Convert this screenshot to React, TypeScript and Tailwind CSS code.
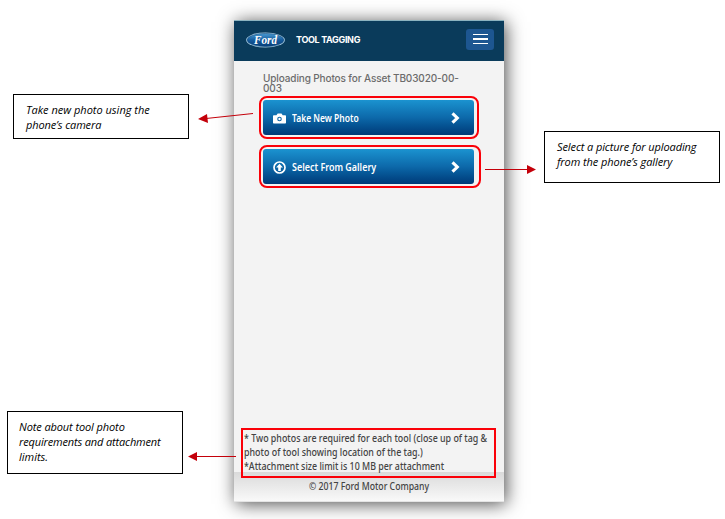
import React from "react";

function Callout({ lines, className }: { lines: { text: string; style: string }[]; className: string }) {
  return (
    <div className={`w-[176px] border border-black bg-white pl-[12px] font-['Open_Sans','Noto_Sans',sans-serif] text-[11px] leading-[15px] italic text-black ${className}`}>
      {lines.map((l) => (
        <div key={l.text} className={`whitespace-nowrap ${l.style}`}>{l.text}</div>
      ))}
    </div>
  );
}

function Chevron() {
  return (
    <svg className="mr-[14px] h-[12px] w-[9px]" viewBox="0 0 9 12" fill="none">
      <path d="M1.5 1.300 6.300 6 1.500 10.700" stroke="white" strokeWidth="3.100" />
    </svg>
  );
}

function Camera() {
  return (
    <svg className="h-[11px] w-[13px]" viewBox="0 0 13 11">
      <path fill="white" fillRule="evenodd" d="M1 2.2h2.4L4.7.4h3.8l1.2 1.8H12c.6 0 1 .4 1 1v6.3c0 .6-.4 1-1 1H1c-.6 0-1-.4-1-1V3.2c0-.6.4-1 1-1ZM6.5 3.7a2.300 2.300 0 1 0 0 4.600 2.300 2.300 0 0 0 0-4.600Z" />
      <circle cx="6.500" cy="6" r="1.200" fill="white" />
    </svg>
  );
}

function Upload() {
  return (
    <svg className="h-[13px] w-[13px]" viewBox="0 0 13 13">
      <circle cx="6.500" cy="6.500" r="5.500" fill="none" stroke="white" strokeWidth="1.700" />
      <path d="M6.500 2.800 9.900 6.500H7.800V9.900H5.200V6.500H3.100Z" fill="white" />
    </svg>
  );
}

function Action({ label, icon, className, labelClass }: { label: string; icon: React.ReactNode; className: string; labelClass: string }) {
  return (
    <div className={`h-[43px] rounded-[8px] border-2 border-[#fa0008] pt-[2px] pl-[2px] ${className}`}>
      <div className="flex h-[35px] w-[211px] items-center rounded-[3px] bg-linear-to-b from-[#1b93d0] via-[#0d69aa] to-[#013a78] pl-[10px] pt-px text-white">
        {icon}
        <span className={`mt-px ml-[6px] flex-1 origin-left whitespace-nowrap font-['Noto_Sans',sans-serif] text-[10px] font-semibold ${labelClass}`}>{label}</span>
        <Chevron />
      </div>
    </div>
  );
}

export default function App() {
  return (
    <div className="relative flex h-[519px] w-[725px] overflow-hidden bg-white">
      <div className="w-[234px]">
        <Callout
          className="mt-[94px] ml-[13px] h-[45px] pt-[7px]"
          lines={[
            { text: "Take new photo using the", style: "" },
            { text: "phone’s camera", style: "tracking-[-0.12px]" },
          ]}
        />
        <Callout
          className="mt-[272px] ml-[7px] h-[63px] pt-[7px]"
          lines={[
            { text: "Note about tool photo", style: "ml-[-1px] tracking-[-0.1px]" },
            { text: "requirements and attachment", style: "ml-[-1px] tracking-[-0.15px]" },
            { text: "limits.", style: "ml-[-1px]" },
          ]}
        />
      </div>

      <main className="mt-[20px] flex h-[482px] w-[270px] flex-col bg-[#f3f3f3] shadow-[2px_2px_17px_rgba(0,0,0,0.7)]">
        <header className="flex h-[41px] items-center border-t border-[#8cb3c0] bg-[#0a3b5b] pl-[12px]">
          <svg className="mt-[-2px] h-[16px] w-[40px]" viewBox="0 0 40 16">
            <defs>
              <linearGradient id="oval" x1="0" y1="0" x2="0" y2="1">
                <stop stopColor="#4a9cd4" />
                <stop offset=".5" stopColor="#155b9d" />
                <stop offset="1" stopColor="#063d79" />
              </linearGradient>
            </defs>
            <ellipse cx="19.500" cy="8" rx="19.400" ry="7.600" fill="#9fc6df" />
            <ellipse cx="19.500" cy="8" rx="18.300" ry="6.500" fill="url(#oval)" stroke="#164c7c" strokeWidth=".6" />
            <text x="8" y="11.500" textLength="23" lengthAdjust="spacingAndGlyphs" fill="white" fontFamily="Liberation Serif, serif" fontStyle="italic" fontWeight="bold" fontSize="11.500">Ford</text>
          </svg>
          <span className="mt-[-2px] ml-[10px] flex-1 whitespace-nowrap font-[Inter,sans-serif] text-[9px] font-bold tracking-[-0.33px] text-white">TOOL TAGGING</span>
          <div className="mt-[-4px] mr-[10px] flex h-[21px] w-[28px] flex-col items-center justify-center gap-[3px] rounded-[3px] bg-[#1d5691]">
            <i className="h-[1.300px] w-[15px] bg-white" />
            <i className="h-[1.300px] w-[15px] bg-white" />
            <i className="h-[1.300px] w-[15px] bg-white" />
          </div>
        </header>

        <section className="flex-1 pt-[12px] pl-[25px]">
          <h1 className="ml-[4px] h-[23px] whitespace-nowrap font-[Inter,sans-serif] text-[10px] leading-[10px] font-medium tracking-[-0.12px] text-[#6b6b6b]">
            Uploading Photos for Asset TB03020-00-
            <br />
            003
          </h1>
          <Action label="Take New Photo" icon={<Camera />} className="w-[220px]" labelClass="scale-x-[0.85]" />
          <Action label="Select From Gallery" icon={<Upload />} className="mt-[6px] w-[222px]" labelClass="scale-x-[0.895]" />
        </section>

        <div className="relative z-10 mb-[-6px] ml-[7px] h-[50px] w-[255px] border-2 border-[#fa0008] pt-px pl-px font-['Noto_Sans',sans-serif] text-[10px] leading-[14px] font-medium text-[#444]">
          <div className="w-max origin-left scale-x-[0.887] whitespace-nowrap">* Two photos are required for each tool (close up of tag &amp;</div>
          <div className="w-max origin-left scale-x-[0.89] whitespace-nowrap">photo of tool showing location of the tag.)</div>
          <div className="w-max origin-left scale-x-[0.885] whitespace-nowrap">*Attachment size limit is 10 MB per attachment</div>
        </div>
        <footer className="flex h-[30px] items-center justify-center border-b border-[#e4e4e4] bg-linear-to-b from-[#dadada] to-[#f9f9f9] font-['Noto_Sans',sans-serif] text-[10px] font-medium text-[#444]">
          <span className="scale-x-[0.87] whitespace-nowrap">© 2017 Ford Motor Company</span>
        </footer>
      </main>

      <div className="flex-1">
        <Callout
          className="mt-[131px] ml-[40px] h-[52px] pt-[7px]"
          lines={[
            { text: "Select a picture for uploading", style: "tracking-[-0.1px]" },
            { text: "from the phone’s gallery", style: "tracking-[-0.08px]" },
          ]}
        />
      </div>

      <svg className="pointer-events-none absolute inset-0 h-[519px] w-[725px]" viewBox="0 0 725 519" stroke="#c4000a" fill="#c4000a">
        <path d="M253 113.500 206 118.500M485 169.500H529M236 456.500H195" fill="none" />
        <path stroke="none" d="M198 119 207 114 208 123ZM536 169.500 527 165V174ZM188 456.500 197 452V461Z" />
      </svg>
    </div>
  );
}
